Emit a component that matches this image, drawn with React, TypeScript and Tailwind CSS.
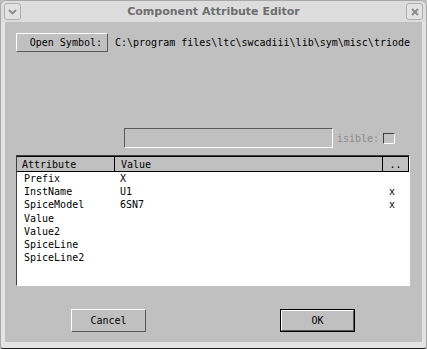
import React from "react";

const rows = [
  { name: "Prefix", value: "X", vis: "" },
  { name: "InstName", value: "U1", vis: "x" },
  { name: "SpiceModel", value: "6SN7", vis: "x" },
  { name: "Value", value: "", vis: "" },
  { name: "Value2", value: "", vis: "" },
  { name: "SpiceLine", value: "", vis: "" },
  { name: "SpiceLine2", value: "", vis: "" },
];

const mono = { fontFamily: "'DejaVu Sans Mono', monospace" };

const raised =
  "border border-t-white border-l-white border-r-[#5a5a5a] border-b-[#5a5a5a] bg-[#c0c0c0]";

const TitleButton = ({ children }: { children: React.ReactNode }) => (
  <div className="w-[17px] h-[17px] rounded-[3px] border border-[#b0b0b0] bg-[#e2e2e2] flex items-center justify-center text-[#8a8a8a]">
    {children}
  </div>
);

export default function App() {
  return (
    <div className="w-[427px] h-[349px] bg-[#c0c0c0] text-[10px] text-black" style={mono}>
      <div className="w-full h-full flex flex-col rounded-t-[6px] rounded-b-[3px] bg-[#e4e4e4] border border-[#a8a8a8] border-b-[#202020] overflow-hidden">
        {/* title bar */}
        <div className="h-[21px] flex items-center justify-between px-[3px] bg-[#dddddd]">
          <TitleButton>
            <svg width="9" height="6" viewBox="0 0 9 6">
              <path d="M1 1 L4.5 4.5 L8 1" stroke="#8a8a8a" strokeWidth="1.8" fill="none" />
            </svg>
          </TitleButton>
          <div
            className="text-[11px] font-bold text-[#6e6e6e] pt-[1px]"
            style={{ fontFamily: "'DejaVu Sans', sans-serif" }}
          >
            Component Attribute Editor
          </div>
          <TitleButton>
            <svg width="8" height="8" viewBox="0 0 8 8">
              <path d="M1 1 L7 7 M7 1 L1 7" stroke="#8a8a8a" strokeWidth="2" fill="none" />
            </svg>
          </TitleButton>
        </div>

        {/* body */}
        <div className="flex-1 mx-[4px] bg-[#c0c0c0] flex flex-col">
          <div className="flex items-center mt-[11px] ml-[11px] h-[19px]">
            <div className={`${raised} w-[92px] h-[19px] flex items-center justify-end pr-[5px]`}>
              Open Symbol:
            </div>
            <span className="ml-[7px]">C:\program files\ltc\swcadiii\lib\sym\misc\triode</span>
          </div>

          <div className="flex items-center mt-[76px] ml-[119px] h-[20px]">
            <div className="w-[209px] h-[20px] border border-t-[#5a5a5a] border-l-[#5a5a5a] border-r-white border-b-white bg-[#c0c0c0]" />
            <span className="ml-[4px] text-[#8c8c8c]">isible:</span>
            <div className="ml-[4px] w-[12px] h-[11px] border border-t-[#404040] border-l-[#404040] border-r-white border-b-white" />
          </div>

          {/* table */}
          <div className="mt-[7px] ml-[11px] w-[394px] h-[131px] border border-t-[#404040] border-l-[#404040] border-r-white border-b-white bg-white flex flex-col">
            <div className="flex h-[16px] bg-[#c0c0c0] border-b border-black">
              <div className="w-[98px] border-r border-black pl-[5px] flex items-center border-t border-t-black">
                Attribute
              </div>
              <div className="w-[268px] border-r border-black pl-[6px] flex items-center border-t border-t-black">
                Value
              </div>
              <div className="w-[26px] border-r border-black border-t border-t-black flex items-end justify-center pb-[1px] leading-none">
                ..
              </div>
            </div>
            <div>
              {rows.map((r) => (
                <div key={r.name} className="flex h-[13.2px] items-center">
                  <div className="w-[103px] pl-[7px]">{r.name}</div>
                  <div className="w-[268px]">{r.value}</div>
                  <div className="flex-1 pl-[1px]">{r.vis}</div>
                </div>
              ))}
            </div>
          </div>

          <div className="flex mt-[23px] h-[23px]">
            <div className={`${raised} ml-[66px] w-[75px] h-[23px] flex items-center justify-center`}>
              Cancel
            </div>
            <div className="ml-[134px] w-[75px] h-[23px] border border-black p-0 flex">
              <div className={`${raised} flex-1 flex items-center justify-center`}>OK</div>
            </div>
          </div>
        </div>
        <div className="h-[6px]" />
      </div>
    </div>
  );
}
